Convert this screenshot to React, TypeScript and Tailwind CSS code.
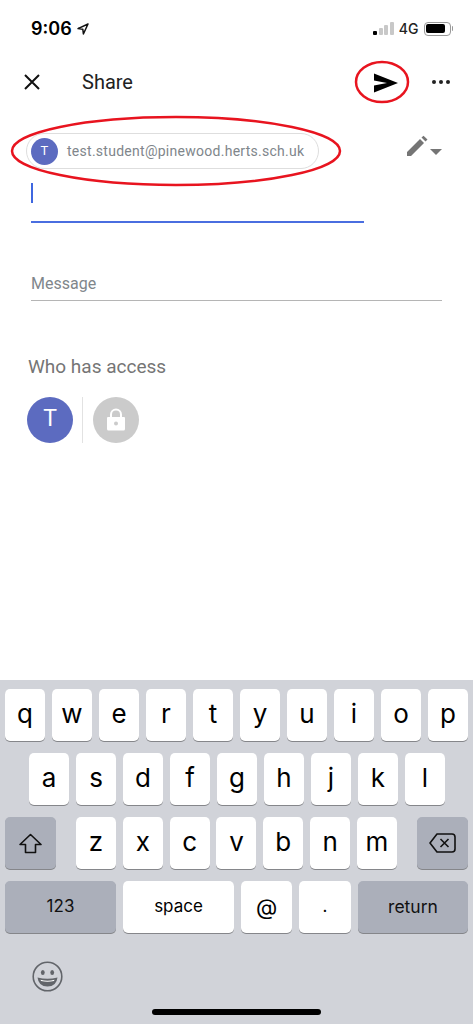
import React from 'react';

const row1 = ['q', 'w', 'e', 'r', 't', 'y', 'u', 'i', 'o', 'p'];
const row2 = ['a', 's', 'd', 'f', 'g', 'h', 'j', 'k', 'l'];
const row3 = ['z', 'x', 'c', 'v', 'b', 'n', 'm'];

function Key({ label, className = '' }: { label: string; className?: string }) {
    return (
        <div className={`h-[52px] rounded-[5px] bg-white shadow-[0_1px_0_#85868a] flex items-center justify-center text-black ${className}`}>
            {label}
        </div>
    );
}

function GreyKey({ children, className = '' }: { children: React.ReactNode; className?: string }) {
    return (
        <div className={`h-[52px] rounded-[5px] bg-[#abafba] shadow-[0_1px_0_#85868a] flex items-center justify-center text-[#111] ${className}`}>
            {children}
        </div>
    );
}

function StatusBar() {
    return (
        <div className="h-[55px] flex items-center justify-between pl-[31px] pr-[20px] pt-[2px]">
            <div className="flex items-center gap-[5px]">
                <span className="text-[18px] font-semibold text-black font-['Inter',sans-serif]">9:06</span>
                <svg width="12" height="12" viewBox="0 0 12 12">
                    <path d="M11 1 L1 5.6 L5.8 6.2 L6.4 11 Z" fill="none" stroke="#111" strokeWidth="1.5" strokeLinejoin="round" />
                </svg>
            </div>
            <div className="flex items-center gap-[5px]">
                <div className="flex items-end gap-[1.5px] h-[13px]">
                    <div className="w-[4px] h-[4px] bg-black rounded-[1px]" />
                    <div className="w-[4px] h-[7px] bg-[#c8c8c8] rounded-[1px]" />
                    <div className="w-[4px] h-[10px] bg-[#c8c8c8] rounded-[1px]" />
                    <div className="w-[4px] h-[13px] bg-[#c8c8c8] rounded-[1px]" />
                </div>
                <span className="text-[14px] font-medium text-[#222] font-['Inter',sans-serif]">4G</span>
                <div className="flex items-center gap-[1px]">
                    <div className="w-[27px] h-[14px] border border-[#999] rounded-[4px] p-[1.5px]">
                        <div className="w-[19px] h-full bg-black rounded-[2px]" />
                    </div>
                    <div className="w-[1.5px] h-[5px] bg-[#999] rounded-r-[1px]" />
                </div>
            </div>
        </div>
    );
}

function TopBar() {
    return (
        <div className="h-[54px] flex items-center pl-[24px] pr-[23px]">
            <svg width="16" height="16" viewBox="0 0 16 16">
                <path d="M1 1 L15 15 M15 1 L1 15" stroke="#111" strokeWidth="2" />
            </svg>
            <span className="ml-[42px] text-[20px] text-[#222] font-['Roboto',sans-serif]">Share</span>
            <svg className="ml-auto mr-[33px] mt-[2px]" width="26" height="20" viewBox="0 0 26 20">
                <path d="M1 0.5 L25 10 L1 19.5 L1 12.5 L14 10 L1 7.5 Z" fill="#000" />
            </svg>
            <div className="flex gap-[2.5px]">
                <div className="w-[4.5px] h-[4.5px] rounded-full bg-[#222]" />
                <div className="w-[4.5px] h-[4.5px] rounded-full bg-[#222]" />
                <div className="w-[4.5px] h-[4.5px] rounded-full bg-[#222]" />
            </div>
        </div>
    );
}

function Recipient() {
    return (
        <div className="flex items-start pl-[26px] pr-[30px]">
            <div className="flex-1">
                <div className="w-[293px] h-[36px] rounded-full border border-[#dedede] flex items-center pl-[4px]">
                    <div className="w-[27px] h-[27px] rounded-full bg-[#5c6bc0] flex items-center justify-center text-white text-[13px] font-['Roboto',sans-serif]">
                        T
                    </div>
                    <span className="ml-[9px] text-[14px] tracking-[0.27px] text-[#80868b] font-['Roboto',sans-serif]">
                        test.student@pinewood.herts.sch.uk
                    </span>
                </div>
                <div className="ml-[5px] w-[333px] h-[38px] border-b-2 border-[#4a6ee0] pt-[14px] box-content">
                    <div className="w-[2px] h-[20px] bg-[#3f67e0]" />
                </div>
            </div>
            <svg className="mt-[2px]" width="38" height="24" viewBox="0 0 38 24">
                <path d="M2 21 L2 17 L15 4 L19 8 L6 21 Z M16.5 2.5 L18.5 0.7 L22.5 4.5 L20.5 6.5 Z" fill="#757575" />
                <path d="M25 14 L37 14 L31 20 Z" fill="#757575" />
            </svg>
        </div>
    );
}

function Keyboard() {
    return (
        <div className="mt-auto h-[344px] bg-[#d1d3d9] flex flex-col font-['Inter',sans-serif] relative">
            <div className="flex justify-between px-[5px] pt-[9px] text-[26px]">
                {row1.map((k) => (
                    <Key key={k} label={k} className="w-[40px] pb-[3px]" />
                ))}
            </div>
            <div className="flex justify-between pl-[29px] pr-[28px] mt-[12px] text-[26px]">
                {row2.map((k) => (
                    <Key key={k} label={k} className="w-[40px] pb-[3px]" />
                ))}
            </div>
            <div className="flex items-center px-[5px] mt-[12px] text-[26px]">
                <GreyKey className="w-[51px]">
                    <svg width="23" height="21" viewBox="0 0 23 21">
                        <path d="M11.5 1.5 L22 11.5 L16.5 11.5 L16.5 19.5 L6.5 19.5 L6.5 11.5 L1 11.5 Z" fill="none" stroke="#111" strokeWidth="1.6" strokeLinejoin="round" />
                    </svg>
                </GreyKey>
                <div className="flex flex-1 justify-between px-[20px]">
                    {row3.map((k) => (
                        <Key key={k} label={k} className="w-[40px] pb-[3px]" />
                    ))}
                </div>
                <GreyKey className="w-[51px]">
                    <svg width="27" height="20" viewBox="0 0 27 20">
                        <path d="M8 1 L23 1 Q26 1 26 4 L26 16 Q26 19 23 19 L8 19 L1 10 Z" fill="none" stroke="#111" strokeWidth="1.6" strokeLinejoin="round" />
                        <path d="M11.5 6 L19.5 14 M19.5 6 L11.5 14" stroke="#111" strokeWidth="1.6" />
                    </svg>
                </GreyKey>
            </div>
            <div className="flex gap-[7px] px-[5px] mt-[12px] text-[17px]">
                <GreyKey className="w-[111px]">123</GreyKey>
                <Key label="space" className="w-[111px] text-[#222]" />
                <Key label="@" className="w-[51px] text-[22px]" />
                <Key label="." className="w-[52px]" />
                <GreyKey className="w-[110px] text-[17.5px]">return</GreyKey>
            </div>
            <svg className="ml-[32px] mt-[28px]" width="31" height="31" viewBox="0 0 31 31">
                <circle cx="15.5" cy="15.5" r="14.3" fill="none" stroke="#62656a" strokeWidth="1.6" />
                <ellipse cx="10.8" cy="11.5" rx="1.9" ry="2.6" fill="#62656a" />
                <ellipse cx="20.2" cy="11.5" rx="1.9" ry="2.6" fill="#62656a" />
                <path d="M5.5 16.5 Q15.5 19 25.5 16.5 Q24.5 25.5 15.5 25.5 Q6.5 25.5 5.5 16.5 Z" fill="#62656a" />
                <path d="M8.5 18.8 Q15.5 20.5 22.5 18.8 L22 20 Q15.5 21.5 9 20 Z" fill="#fff" />
            </svg>
            <div className="absolute left-[152px] bottom-[9px] w-[169px] h-[6px] rounded-full bg-black" />
        </div>
    );
}

export default function App() {
    return (
        <div className="relative w-[473px] h-[1024px] bg-white flex flex-col overflow-hidden">
            <StatusBar />
            <TopBar />
            <div className="mt-[24px]">
                <Recipient />
            </div>

            <div className="mt-[49px] mx-[31px] h-[29px] border-b border-[#b5b5b5] text-[16px] text-[#80868b] font-['Roboto',sans-serif] flex items-start">
                Message
            </div>

            <div className="mt-[52px] ml-[28px] text-[19px] text-[#757575] font-['Roboto',sans-serif]">Who has access</div>

            <div className="mt-[15px] ml-[27px] flex items-center">
                <div className="w-[46px] h-[46px] rounded-full bg-[#5c6bc0] flex items-center justify-center text-white text-[23px] font-['Roboto',sans-serif]">
                    T
                </div>
                <div className="ml-[9px] w-px h-[46px] bg-[#e2e2e2]" />
                <div className="ml-[10px] w-[46px] h-[46px] rounded-full bg-[#cbcbcb] flex items-center justify-center">
                    <svg width="20" height="24" viewBox="0 0 20 24">
                        <path d="M5 10 V6.5 a5 5 0 0 1 10 0 V10" fill="none" stroke="#fff" strokeWidth="2" />
                        <path fillRule="evenodd" d="M2 9 H18 a1 1 0 0 1 1 1 V21 a1.5 1.5 0 0 1 -1.5 1.5 H2.5 A1.5 1.5 0 0 1 1 21 V10 a1 1 0 0 1 1 -1 Z M10 13.5 a2 2 0 1 0 0 4 a2 2 0 1 0 0 -4 Z" fill="#fff" />
                    </svg>
                </div>
            </div>

            <Keyboard />

            {/* red annotation ellipses drawn over the screenshot */}
            <svg className="absolute left-0 top-0 pointer-events-none" width="473" height="200" viewBox="0 0 473 200">
                <ellipse cx="176" cy="151" rx="164" ry="34" fill="none" stroke="#e8141f" strokeWidth="2.5" />
                <ellipse cx="382" cy="82" rx="26" ry="20" fill="none" stroke="#e8141f" strokeWidth="2.5" />
            </svg>
        </div>
    );
}
